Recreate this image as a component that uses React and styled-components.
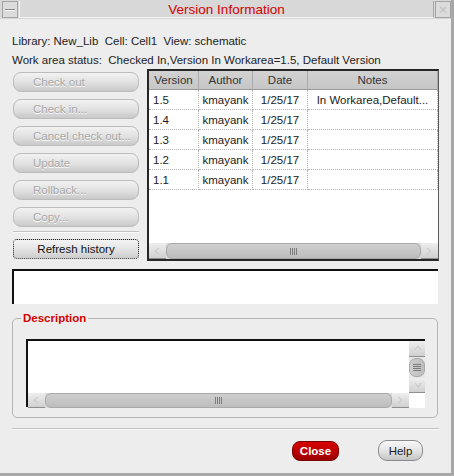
import React from 'react';
import styled, { createGlobalStyle } from 'styled-components';

const Global = createGlobalStyle`
  html, body { margin: 0; padding: 0; background: #ececec; }
  body { font-family: "Liberation Sans", Arial, sans-serif; font-size: 11.5px; color: #222; }
  * { box-sizing: border-box; }
`;

const Window = styled.div`
  width: 454px;
  height: 476px;
  border-right: 3px solid #a8a8a8;
  border-bottom: 3px solid #a8a8a8;
  background: #ededed;
  display: flex;
  flex-direction: column;
`;

const TitleBar = styled.div`
  height: 19px;
  display: flex;
  align-items: stretch;
  background: #d8d8d8;
  padding: 1px 0 1px 2px;
  gap: 1px;
`;

const TitleBox = styled.div`
  width: 16px;
  border: 1px solid #a4a4a4;
  background: #dcdcdc;
  display: flex;
  align-items: center;
  justify-content: center;
  color: #c2c2c2;
  font-size: 12px;
`;

const MinusMark = styled.span`
  width: 10px;
  height: 2px;
  background: #8a8a8a;
  border-bottom: 1px solid #f6f6f6;
`;

const Title = styled.div`
  flex: 1;
  display: flex;
  align-items: center;
  justify-content: center;
  color: #d40000;
  font-size: 13.5px;
  border-left: 1px solid #f2f2f2;
  border-bottom: 1px solid #f2f2f2;
  border-right: 1px solid #a8a8a8;
`;

const Info = styled.div`
  padding: 13px 0 0 12px;
  display: flex;
  flex-direction: column;
  gap: 1px;
`;

const InfoLine = styled.div`
  line-height: 18px;
  height: 18px;
  white-space: pre;
`;

const MainRow = styled.div`
  display: flex;
  padding-left: 13px;
  height: 193px;
  gap: 8px;
`;

const LeftCol = styled.div`
  width: 126px;
  display: flex;
  flex-direction: column;
  padding-top: 3px;
`;

const ButtonStack = styled.div`
  display: flex;
  flex-direction: column;
  gap: 7px;
`;

const SideButton = styled.div`
  height: 20px;
  border: 1px solid #bcbcbc;
  border-radius: 8px;
  background: linear-gradient(#f2f2f2, #e0e0e0 55%, #c9c9c9);
  display: flex;
  align-items: center;
  padding-left: 19px;
  color: #a6a6a6;
  text-shadow: 0 1px 0 #ffffff;
  white-space: nowrap;
`;

const Separator = styled.div`
  height: 2px;
  margin: ${p => p.$top || 0}px ${p => p.$side || 0}px 0;
  border-top: 1px solid #c2c2c2;
  border-bottom: 1px solid #fafafa;
`;

const RefreshButton = styled.div`
  margin-top: 6px;
  height: 20px;
  border: 1px dotted #222;
  border-radius: 4px;
  background: linear-gradient(#f4f4f4, #e2e2e2 55%, #cdcdcd);
  display: flex;
  align-items: center;
  justify-content: center;
  color: #111;
`;

const TableFrame = styled.div`
  width: 292px;
  height: 192px;
  border-top: 2px solid #262626;
  border-left: 2px solid #262626;
  border-right: 1px solid #5a5a5a;
  border-bottom: 2px solid #262626;
  background: #ffffff;
  display: flex;
  flex-direction: column;
`;

const Grid = styled.div`
  display: grid;
  grid-template-columns: 50px 54px 55px 130px;
`;

const HeadCell = styled.div`
  height: 19px;
  background: linear-gradient(#d2d2d2, #c6c6c6);
  border-right: 1px solid #a9a9a9;
  border-bottom: 1px solid #9a9a9a;
  display: flex;
  align-items: center;
  justify-content: center;
  color: #333;
`;

const Cell = styled.div`
  height: 20px;
  border-right: 1px dotted #b4b4b4;
  border-bottom: 1px dotted #b4b4b4;
  display: flex;
  align-items: center;
  justify-content: ${p => (p.$left ? 'flex-start' : 'center')};
  padding-left: ${p => (p.$left ? '4px' : '0')};
  white-space: nowrap;
  overflow: hidden;
  color: #1c1c1c;
`;

const Filler = styled.div`
  flex: 1;
`;

const HScroll = styled.div`
  height: ${p => p.$h || 16}px;
  display: flex;
  background: #dadada;
`;

const ArrowBtn = styled.div`
  width: ${p => p.$w || 17}px;
  height: ${p => p.$h ? `${p.$h}px` : 'auto'};
  background: linear-gradient(#eeeeee, #d0d0d0);
  border-bottom: 1px solid #8e8e8e;
  display: flex;
  align-items: center;
  justify-content: center;
`;

const HThumb = styled.div`
  flex: 1;
  border: 1px solid #a8a8a8;
  border-radius: 6px;
  background: linear-gradient(#cfcfcf, #bdbdbd);
  display: flex;
  align-items: center;
  justify-content: center;
`;

const Grip = styled.div`
  display: flex;
  flex-direction: ${p => (p.$vertical ? 'column' : 'row')};
  gap: 1px;
`;

const GripLine = styled.span`
  display: block;
  width: ${p => (p.$vertical ? '8px' : '1px')};
  height: ${p => (p.$vertical ? '1px' : '7px')};
  background: #7c7c7c;
`;

const TextField = styled.div`
  margin: 7px 0 0 12px;
  width: 426px;
  height: 35px;
  border-top: 2px solid #111;
  border-left: 2px solid #111;
  background: #ffffff;
`;

const Group = styled.fieldset`
  margin: 7px 0 0 12px;
  width: 426px;
  border: 1px solid #b4b4b4;
  border-radius: 5px;
  padding: 14px 12px 10px 13px;
  min-width: 0;
`;

const Legend = styled.legend`
  color: #d40000;
  font-weight: bold;
  line-height: 14px;
  padding: 0 2px;
  margin-left: -5px;
`;

const DescArea = styled.div`
  width: 399px;
  height: 68px;
  border-top: 2px solid #111;
  border-left: 2px solid #111;
  background: #ffffff;
  display: grid;
  grid-template-columns: 1fr 16px;
  grid-template-rows: 1fr 15px;
`;

const VScroll = styled.div`
  display: flex;
  flex-direction: column;
  background: #e6e6e6;
`;

const VThumb = styled.div`
  height: 19px;
  margin: 1px 0;
  border: 1px solid #a8a8a8;
  border-radius: 7px;
  background: linear-gradient(90deg, #cfcfcf, #bdbdbd);
  display: flex;
  align-items: center;
  justify-content: center;
`;

const Gap = styled.div`
  flex: 1;
`;

const Corner = styled.div`
  background: #ffffff;
`;

const Footer = styled.div`
  display: flex;
  justify-content: flex-end;
  gap: 39px;
  padding-right: 28px;
  margin-top: 11px;
`;

const CloseButton = styled.div`
  width: 47px;
  height: 20px;
  border-radius: 8px;
  border: 1px solid #7a0000;
  background: linear-gradient(#d60000, #b80000 60%, #9a0000);
  color: #ffffff;
  font-weight: bold;
  display: flex;
  align-items: center;
  justify-content: center;
`;

const HelpButton = styled.div`
  width: 45px;
  height: 21px;
  margin-top: -1px;
  border-radius: 9px;
  border: 1px solid #8c8c8c;
  background: linear-gradient(#f8f8f8, #e2e2e2 55%, #c4c4c4);
  color: #1a1a1a;
  display: flex;
  align-items: center;
  justify-content: center;
`;

const Arrow = ({ dir }) => {
  const pts = {
    left: '6,2 2,5 6,8',
    right: '2,2 6,5 2,8',
    up: '2,6 5,2 8,6',
    down: '2,3 5,7 8,3',
  }[dir];
  return (
    <svg width="9" height="10" viewBox="0 0 9 10">
      <polyline points={pts} fill="none" stroke="#c4c4c4" strokeWidth="1" />
    </svg>
  );
};

const HGrip = () => (
  <Grip>
    {[0, 1, 2, 3].map(i => <GripLine key={i} />)}
  </Grip>
);

const VGrip = () => (
  <Grip $vertical>
    {[0, 1, 2, 3].map(i => <GripLine key={i} $vertical />)}
  </Grip>
);

const rows = [
  ['1.5', 'kmayank', '1/25/17', 'In Workarea,Default...'],
  ['1.4', 'kmayank', '1/25/17', ''],
  ['1.3', 'kmayank', '1/25/17', ''],
  ['1.2', 'kmayank', '1/25/17', ''],
  ['1.1', 'kmayank', '1/25/17', ''],
];

const sideButtons = ['Check out', 'Check in...', 'Cancel check out...', 'Update', 'Rollback...', 'Copy...'];

export default function App() {
  return (
    <>
      <Global />
      <Window>
        <TitleBar>
          <TitleBox><MinusMark /></TitleBox>
          <Title>Version Information</Title>
          <TitleBox>✕</TitleBox>
        </TitleBar>
        <Info>
          <InfoLine>Library: New_Lib  Cell: Cell1  View: schematic</InfoLine>
          <InfoLine>Work area status:  Checked In,Version In Workarea=1.5, Default Version</InfoLine>
        </Info>
        <MainRow>
          <LeftCol>
            <ButtonStack>
              {sideButtons.map(b => <SideButton key={b}>{b}</SideButton>)}
            </ButtonStack>
            <Separator $top={4} />
            <RefreshButton>Refresh history</RefreshButton>
          </LeftCol>
          <TableFrame>
            <Grid>
              <HeadCell>Version</HeadCell>
              <HeadCell>Author</HeadCell>
              <HeadCell>Date</HeadCell>
              <HeadCell>Notes</HeadCell>
              {rows.map(r => (
                <React.Fragment key={r[0]}>
                  <Cell $left>{r[0]}</Cell>
                  <Cell>{r[1]}</Cell>
                  <Cell>{r[2]}</Cell>
                  <Cell>{r[3]}</Cell>
                </React.Fragment>
              ))}
            </Grid>
            <Filler />
            <HScroll>
              <ArrowBtn><Arrow dir="left" /></ArrowBtn>
              <HThumb><HGrip /></HThumb>
              <ArrowBtn><Arrow dir="right" /></ArrowBtn>
            </HScroll>
          </TableFrame>
        </MainRow>
        <TextField />
        <Group>
          <Legend>Description</Legend>
          <DescArea>
            <div />
            <VScroll>
              <ArrowBtn $w={16} $h={16}><Arrow dir="up" /></ArrowBtn>
              <VThumb><VGrip /></VThumb>
              <Gap />
              <ArrowBtn $w={16} $h={15}><Arrow dir="down" /></ArrowBtn>
            </VScroll>
            <HScroll $h={15}>
              <ArrowBtn><Arrow dir="left" /></ArrowBtn>
              <HThumb><HGrip /></HThumb>
              <ArrowBtn><Arrow dir="right" /></ArrowBtn>
            </HScroll>
            <Corner />
          </DescArea>
        </Group>
        <Separator $top={10} $side={12} />
        <Footer>
          <CloseButton>Close</CloseButton>
          <HelpButton>Help</HelpButton>
        </Footer>
      </Window>
    </>
  );
}
